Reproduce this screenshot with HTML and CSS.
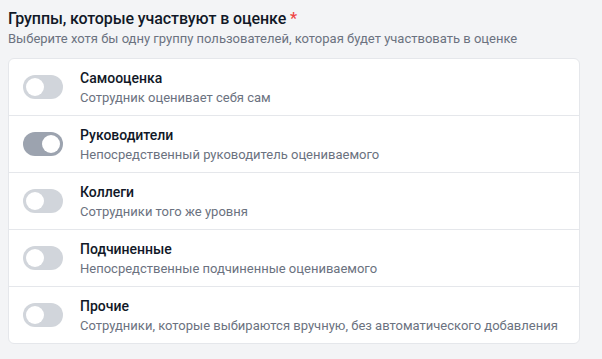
FILE: index.html
```html
<!DOCTYPE html>
<html lang="ru">
<head>
<meta charset="utf-8">
<link rel="stylesheet" href="styles.css">
</head>
<body>
<div class="page">
  <h2 class="title">Группы, которые участвуют в оценке <span class="req">*</span></h2>
  <p class="subtitle">Выберите хотя бы одну группу пользователей, которая будет участвовать в оценке</p>
  <div class="card">
    <div class="row">
      <span class="toggle"><span class="knob"></span></span>
      <div class="text"><div class="name">Самооценка</div><div class="desc">Сотрудник оценивает себя сам</div></div>
    </div>
    <div class="row">
      <span class="toggle on"><span class="knob"></span></span>
      <div class="text"><div class="name">Руководители</div><div class="desc">Непосредственный руководитель оцениваемого</div></div>
    </div>
    <div class="row">
      <span class="toggle"><span class="knob"></span></span>
      <div class="text"><div class="name">Коллеги</div><div class="desc">Сотрудники того же уровня</div></div>
    </div>
    <div class="row">
      <span class="toggle"><span class="knob"></span></span>
      <div class="text"><div class="name">Подчиненные</div><div class="desc">Непосредственные подчиненные оцениваемого</div></div>
    </div>
    <div class="row">
      <span class="toggle"><span class="knob"></span></span>
      <div class="text"><div class="name">Прочие</div><div class="desc">Сотрудники, которые выбираются вручную, без автоматического добавления</div></div>
    </div>
  </div>
</div>
</body>
</html>
```

FILE: styles.css
```css
html, body {
  margin: 0;
  padding: 0;
  background: #f3f4f6;
}
body {
  font-family: Roboto, "Liberation Sans", Arial, sans-serif;
  color: #111827;
}
.page {
  padding: 8px 22px 16px 8px;
}
.title {
  margin: 0;
  font-size: 16px;
  line-height: 22px;
  font-weight: 500;
  letter-spacing: -0.1px;
  color: #111827;
}
.req {
  color: #ef4444;
}
.subtitle {
  margin: 0 0 10px;
  font-size: 13px;
  line-height: 18px;
  color: #6b7280;
}
.card {
  background: #fff;
  border: 1px solid #e5e7eb;
  border-radius: 6px;
}
.row {
  display: flex;
  align-items: center;
  height: 56px;
  padding: 0 14px;
  border-bottom: 1px solid #e5e7eb;
}
.row:last-child {
  border-bottom: none;
}
.toggle {
  flex: none;
  width: 40px;
  height: 24px;
  border-radius: 12px;
  background: #d1d5db;
  display: flex;
  align-items: center;
  padding: 0 3px;
  box-sizing: border-box;
}
.toggle.on {
  background: #9ca3af;
  justify-content: flex-end;
}
.knob {
  width: 18px;
  height: 18px;
  border-radius: 50%;
  background: #fff;
}
.text {
  margin-left: 17px;
  padding-top: 1px;
}
.name {
  font-size: 14px;
  line-height: 19px;
  font-weight: 500;
  color: #111827;
}
.desc {
  font-size: 13px;
  line-height: 19px;
  color: #6b7280;
}
```
